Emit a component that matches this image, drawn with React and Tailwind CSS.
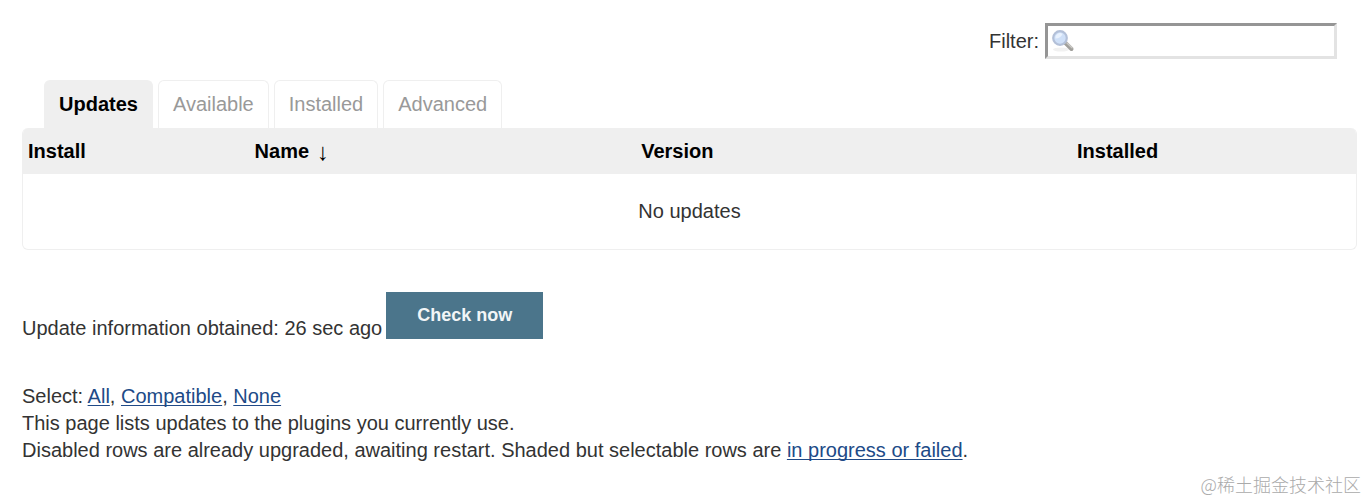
const tabs = ['Updates', 'Available', 'Installed', 'Advanced']

function SearchIcon() {
  return (
    <svg className="pointer-events-none absolute left-1.5 top-1.5 size-6" viewBox="0 0 24 24" fill="none" aria-hidden="true">
      <ellipse cx="10" cy="20.5" rx="8" ry="2" fill="#f1f1f1" />
      <path d="M14.5 14 20.5 20" stroke="#a09f9b" strokeWidth="4" strokeLinecap="round" />
      <path d="M16 14 21 18.8" stroke="#cbcac6" strokeWidth="1.5" strokeLinecap="round" />
      <circle cx="9" cy="9" r="6.8" fill="#cfe0f8" stroke="#b3c0d8" strokeWidth="2.2" />
      <path d="M4.5 9.5a4.5 4.5 0 0 1 7-4.5C10.5 7.5 8 9.500 4.5 9.500Z" fill="#e9f2fe" />
    </svg>
  )
}

function TextLink({ children }) {
  return (
    <a href="#" className="text-[#204a87] underline decoration-1 underline-offset-2 [text-decoration-skip-ink:none]">
      {children}
    </a>
  )
}

function Tab({ label, active }) {
  return (
    <button
      type="button"
      role="tab"
      aria-selected={active}
      className={
        active
          ? 'h-12 rounded-t-md border border-b-0 border-[#efefef] bg-[#efefef] px-3.5 font-bold text-black'
          : 'h-12 rounded-t-md border border-b-0 border-[#efefef] bg-white px-3.5 text-[#999]'
      }
    >
      {label}
    </button>
  )
}

export default function App() {
  return (
    <div className="relative min-h-screen bg-white pl-[22px] pr-2.5 pt-[23px] font-['Liberation_Sans',Arial,sans-serif] text-[20px] leading-[27px] text-[#333]">
      <div className="flex items-center justify-end gap-1.5 pr-5">
        <label htmlFor="filter">Filter:</label>
        <div className="relative">
          <input
            id="filter"
            type="text"
            className="block h-9 w-[292px] border-[3px] border-b-[#e3e3e3] border-l-[#959595] border-r-[#e3e3e3] border-t-[#959595] bg-white pl-8 outline-none"
          />
          <SearchIcon />
        </div>
      </div>

      <div role="tablist" className="mt-[21px] flex gap-[5px] pl-[22px]">
        {tabs.map((label) => (
          <Tab key={label} label={label} active={label === 'Updates'} />
        ))}
      </div>

      <div className="overflow-hidden rounded-md border border-t-0 border-[#efefef]">
        <table className="w-full table-fixed border-collapse">
          <thead className="bg-[#efefef] text-left text-black">
            <tr className="h-[46px]">
              <th className="w-[17%] px-[5px]">Install</th>
              <th className="w-[29%] px-[5px]">
                <span className="flex items-center gap-2">
                  Name <span className="text-[24px] font-normal">↓</span>
                </span>
              </th>
              <th className="w-[32.7%] px-[5px]">Version</th>
              <th className="px-[5px]">Installed</th>
            </tr>
          </thead>
          <tbody>
            <tr className="h-[75px]">
              <td colSpan={4} className="text-center">No updates</td>
            </tr>
          </tbody>
        </table>
      </div>

      <div className="mt-[42px] flex items-end gap-1">
        <span className="leading-[22px]">Update information obtained: 26 sec ago</span>
        <button type="button" className="h-[47px] bg-[#4b758b] px-[31px] text-[18px] font-bold text-[#f2f5f7]">
          Check now
        </button>
      </div>

      <div className="mt-11">
        <p>
          Select: <TextLink>All</TextLink>, <TextLink>Compatible</TextLink>, <TextLink>None</TextLink>
        </p>
        <p>This page lists updates to the plugins you currently use.</p>
        <p>
          Disabled rows are already upgraded, awaiting restart. Shaded but selectable rows are{' '}
          <TextLink>in progress or failed</TextLink>.
        </p>
      </div>

      <div className="absolute bottom-1 right-1.5 font-['Noto_Sans_CJK_SC',sans-serif] text-[18px] font-light leading-7 text-[#aaa]">
        @稀土掘金技术社区
      </div>
    </div>
  )
}
